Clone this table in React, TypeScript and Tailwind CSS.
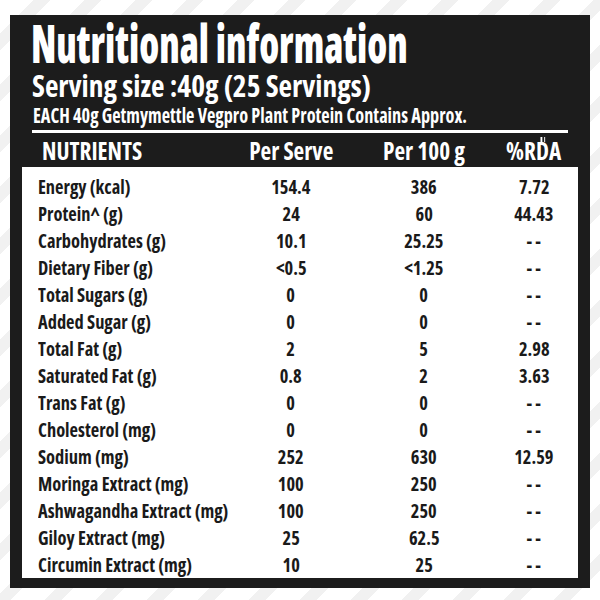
const rows = [
  ["Energy (kcal)", "154.4", "386", "7.72"],
  ["Protein^ (g)", "24", "60", "44.43"],
  ["Carbohydrates (g)", "10.1", "25.25", "- -"],
  ["Dietary Fiber (g)", "<0.5", "<1.25", "- -"],
  ["Total Sugars (g)", "0", "0", "- -"],
  ["Added Sugar (g)", "0", "0", "- -"],
  ["Total Fat (g)", "2", "5", "2.98"],
  ["Saturated Fat (g)", "0.8", "2", "3.63"],
  ["Trans Fat (g)", "0", "0", "- -"],
  ["Cholesterol (mg)", "0", "0", "- -"],
  ["Sodium (mg)", "252", "630", "12.59"],
  ["Moringa Extract (mg)", "100", "250", "- -"],
  ["Ashwagandha Extract (mg)", "100", "250", "- -"],
  ["Giloy Extract (mg)", "25", "62.5", "- -"],
  ["Circumin Extract (mg)", "10", "25", "- -"],
]

// the artwork uses a narrow display face, so the condensed Open Sans gets squeezed per line
function Squeeze({ scale, children }: { scale: string; children: React.ReactNode }) {
  return <span className={`inline-block whitespace-nowrap ${scale}`}>{children}</span>
}

export default function App() {
  return (
    <div className="w-[600px] h-[600px] overflow-hidden bg-[repeating-linear-gradient(135deg,#ffffff_0px,#ffffff_24px,#f1f1f1_24px,#f1f1f1_36px)] pt-[15px] pl-[10px] font-['Open_Sans',sans-serif] font-stretch-condensed">
      <div className="w-[580px] h-[573px] bg-[#1c1c1c] flex flex-col">
        <div className="text-white">
          <h1 className="pl-[21px] text-[53px] leading-[56px] font-extrabold">
            <Squeeze scale="origin-left scale-x-[0.73]">Nutritional information</Squeeze>
          </h1>
          <p className="pl-[22px] text-[30px] leading-[30px] font-bold">
            <Squeeze scale="origin-left scale-x-[0.98]">Serving size :40g (25 Servings)</Squeeze>
          </p>
          <p className="pl-[23px] mt-[3px] text-[20.5px] leading-[22px] font-bold">
            <Squeeze scale="origin-left scale-x-[0.89]">EACH 40g Getmymettle Vegpro Plant Protein Contains Approx.</Squeeze>
          </p>
        </div>

        <div className="mx-[22px] mt-[4px] h-[3px] bg-white" />

        <div className="mx-[12px] h-[34px] grid grid-cols-[202px_134px_132px_88px] text-white text-[25px] leading-[34px] font-bold">
          <div className="pl-[20px]">
            <Squeeze scale="origin-left scale-x-[0.93]">NUTRIENTS</Squeeze>
          </div>
          <div className="text-center">
            <Squeeze scale="origin-center scale-x-[0.93]">Per Serve</Squeeze>
          </div>
          <div className="text-center">
            <Squeeze scale="origin-center scale-x-[0.93]">Per 100 g</Squeeze>
          </div>
          <div className="text-center">
            <Squeeze scale="origin-center scale-x-[0.93]">
              %R
              <span className="relative">
                D
                <span className="absolute left-[5px] top-[4px] flex gap-[2px]">
                  <span className="w-[1.5px] h-[5px] bg-white" />
                  <span className="w-[1.5px] h-[5px] bg-white" />
                </span>
              </span>
              A
            </Squeeze>
          </div>
        </div>

        <div className="mx-[12px] bg-white pt-[6px] h-[411px] text-[#1a1a1a] text-[19.5px] leading-[27px] font-bold">
          {rows.map((row, index) => (
            <div key={index} className="h-[27px] grid grid-cols-[202px_134px_132px_88px]">
              <div className="pl-[16px]">
                <Squeeze scale="origin-left scale-x-[0.945]">{row[0]}</Squeeze>
              </div>
              <div className="text-center">
                <Squeeze scale="origin-center scale-x-[0.945]">{row[1]}</Squeeze>
              </div>
              <div className="text-center">
                <Squeeze scale="origin-center scale-x-[0.945]">{row[2]}</Squeeze>
              </div>
              <div className="text-center">
                <Squeeze scale="origin-center scale-x-[0.945]">{row[3]}</Squeeze>
              </div>
            </div>
          ))}
        </div>
      </div>
    </div>
  )
}
